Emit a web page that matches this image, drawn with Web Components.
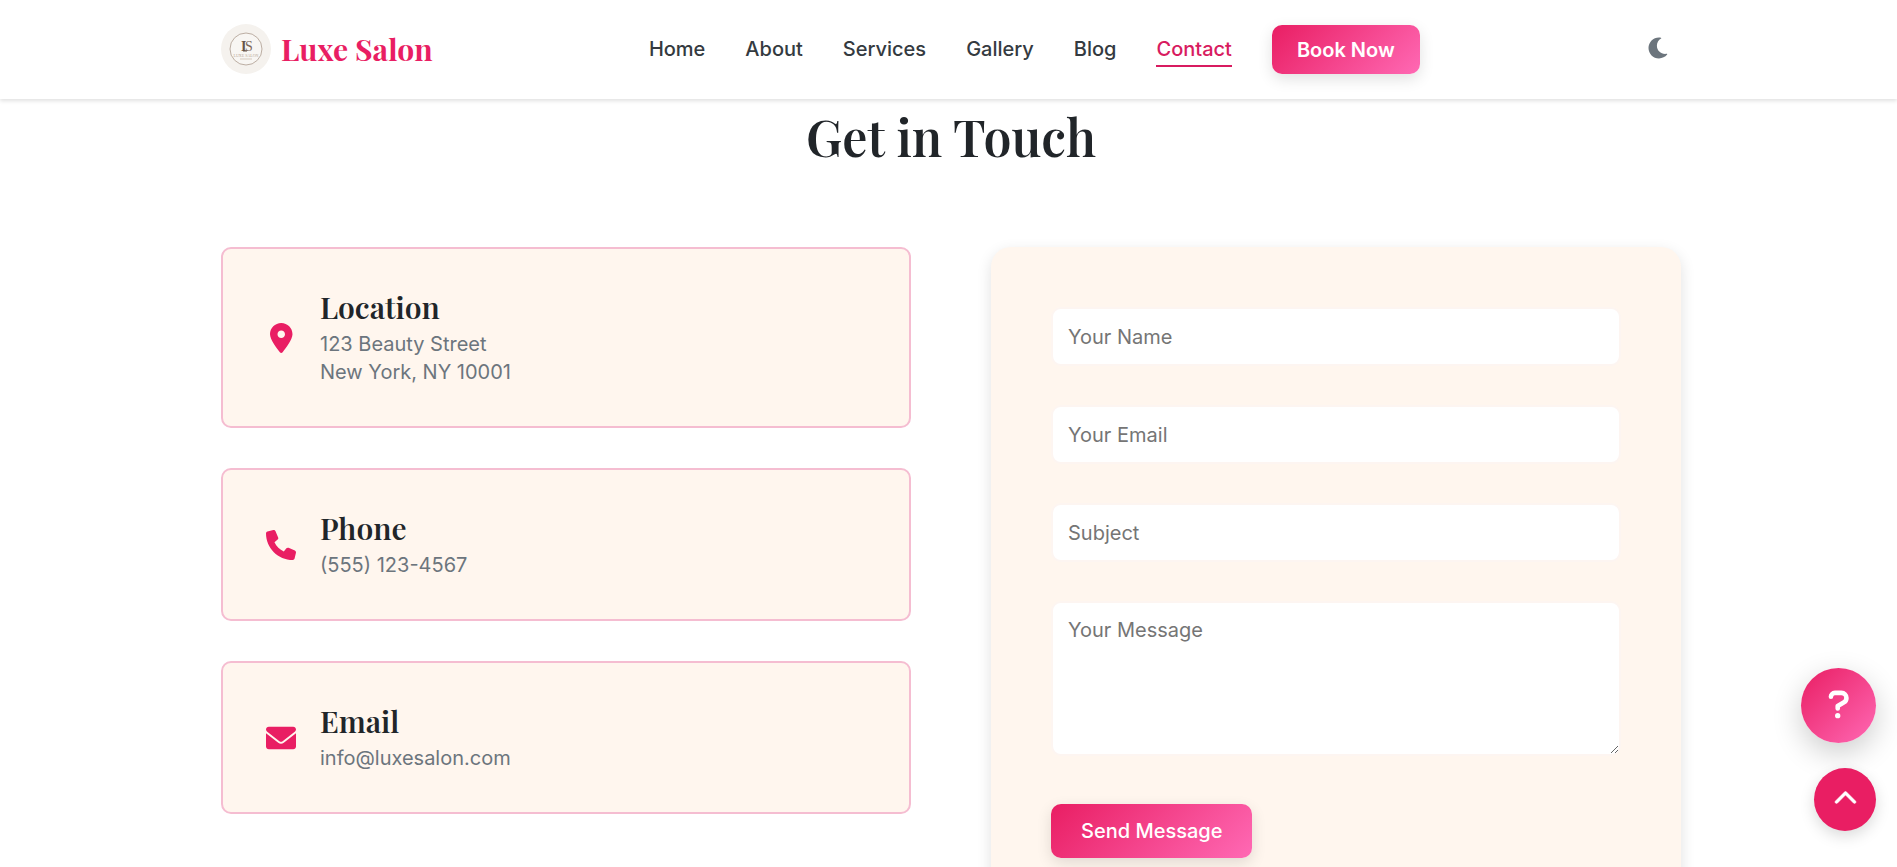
<!DOCTYPE html>
<html lang="en">
<head>
    <meta charset="utf-8">
    <meta name="viewport" content="width=device-width, initial-scale=1">
    <title>Luxe Salon - Contact</title>
    <style>
        html {
            --primary: #e91e63;
            --primary-dark: #d81b60;
            --gradient: linear-gradient(135deg, #e91e63, #ff69b4);
            --cream: #fff6ee;
            --border: #f5bdd1;
            --dark: #212529;
            --muted: #6c757d;
            --heading-font: "Playfair Display", "Liberation Serif", serif;
            scrollbar-width: none;
        }

        body {
            margin: 0;
            background: #fff;
            color: var(--dark);
            font: 400 20px/28px Inter, "Liberation Sans", sans-serif;
        }
    </style>
</head>
<body>

<salon-header>
    <salon-nav-link href="#home">Home</salon-nav-link>
    <salon-nav-link href="#about">About</salon-nav-link>
    <salon-nav-link href="#services">Services</salon-nav-link>
    <salon-nav-link href="#gallery">Gallery</salon-nav-link>
    <salon-nav-link href="#blog">Blog</salon-nav-link>
    <salon-nav-link href="#contact" active>Contact</salon-nav-link>
</salon-header>

<salon-contact>
    <span slot="title">Get in Touch</span>
    <salon-info-card slot="info" icon="location">
        <span slot="title">Location</span>
        123 Beauty Street<br>New York, NY 10001
    </salon-info-card>
    <salon-info-card slot="info" icon="phone">
        <span slot="title">Phone</span>
        (555) 123-4567
    </salon-info-card>
    <salon-info-card slot="info" icon="envelope">
        <span slot="title">Email</span>
        info@luxesalon.com
    </salon-info-card>
    <salon-contact-form slot="form"></salon-contact-form>
</salon-contact>

<salon-floating-actions></salon-floating-actions>

<script>
(() => {

    const ICONS = {
        location: ["0 0 384 512", `<path d="M168.3 499.2C116.1 435 0 279.4 0 192C0 85.96 85.96 0 192 0C298 0 384 85.96 384 192C384 279.4 267 435 215.7 499.2C203.4 514.5 180.6 514.5 168.3 499.2zM192 256C227.3 256 256 227.3 256 192C256 156.7 227.3 128 192 128C156.7 128 128 156.7 128 192C128 227.3 156.7 256 192 256z"/>`],
        phone: ["0 0 512 512", `<path d="M511.2 387l-23.25 100.8c-3.266 14.25-15.79 24.22-30.46 24.22C205.2 512 0 306.8 0 54.5c0-14.66 9.969-27.2 24.22-30.45l100.8-23.25C139.7-2.602 154.7 5.018 160.8 18.92l46.52 108.5c5.438 12.78 1.77 27.67-8.98 36.45L144.5 207.1c33.98 69.22 90.26 125.5 159.5 159.5l44.08-53.8c8.688-10.78 23.69-14.51 36.47-8.975l108.5 46.51C506.1 357.2 514.6 372.4 511.2 387z"/>`],
        envelope: ["0 0 512 512", `<path d="M256 352c-16.53 0-33.06-5.422-47.16-16.41L0 173.2V400C0 426.5 21.49 448 48 448h416c26.51 0 48-21.49 48-48V173.2l-208.8 162.5C289.1 346.6 272.5 352 256 352zM16.29 145.3l212.2 165.1c16.19 12.6 38.87 12.6 55.06 0l212.2-165.1C505.1 137.3 512 125 512 112C512 85.49 490.5 64 464 64h-416C21.49 64 0 85.49 0 112C0 125 6.01 137.3 16.29 145.3z"/>`],
        moon: ["0 0 512 512", `<path d="M32 256c0-123.8 100.3-224 223.8-224c11.36 0 29.7 1.668 40.9 3.746c9.616 1.777 11.75 14.63 3.279 19.44C245 86.5 211.2 144.6 211.2 207.8c0 109.7 99.71 193 208.3 172.3c9.561-1.805 16.28 9.324 10.11 16.95C387.9 448.6 324.8 480 255.8 480C132.1 480 32 379.6 32 256z"/>`],
        question: ["0 0 320 512", `<path fill="none" stroke="currentColor" stroke-width="76" stroke-linecap="round" stroke-linejoin="round" d="M32 128c0-35.3 28.7-64 64-64h108.3c46.2 0 83.7 37.5 83.7 83.8c0 32-17.8 60.6-46.5 75.3L144 280v40"/><circle cx="144" cy="440" r="44"/>`],
        chevron: ["0 0 448 512", `<path stroke="currentColor" stroke-width="10" d="M416 352c-8.188 0-16.38-3.125-22.62-9.375L224 173.3l-169.4 169.4c-12.5 12.5-32.75 12.5-45.25 0s-12.5-32.75 0-45.25l192-192c12.5-12.5 32.75-12.5 45.25 0l192 192c12.5 12.5 12.5 32.75 0 45.25C432.4 348.9 424.2 352 416 352z"/>`]
    }

    function define(name, template, setup){
        let el = document.createElement("template")
        el.innerHTML = template
        customElements.define(name, class extends HTMLElement {
            constructor(){
                super()
                this.root = this.attachShadow({mode: 'open'})
                this.root.appendChild(el.content.cloneNode(true))
            }

            connectedCallback(){
                if(setup) setup(this, this.root)
            }
        })
    }

    define("salon-icon", `
        <style>
            :host { display: flex; justify-content: center; }
            svg { display: block; height: var(--icon-size, 30px); fill: currentColor; overflow: visible; }
        </style>
        <svg aria-hidden="true"></svg>
    `, (host, root) => {
        let icon = ICONS[host.getAttribute("name")]
        if(!icon) return
        let svg = root.querySelector("svg")
        svg.setAttribute("viewBox", icon[0])
        svg.innerHTML = icon[1]
    })

    define("salon-button", `
        <style>
            :host { display: block; }
            button {
                display: block;
                border: 0;
                border-radius: 10px;
                padding: var(--button-padding, 13px 30px);
                background: var(--gradient);
                color: #fff;
                font: inherit;
                font-weight: var(--button-weight, 500);
                box-shadow: 0 5px 15px rgba(0, 0, 0, 0.12);
                cursor: pointer;
            }
        </style>
        <button type="button"><slot></slot></button>
    `)

    define("salon-logo", `
        <style>
            :host { display: block; }
            a { display: flex; align-items: center; gap: 10px; color: var(--primary); text-decoration: none; }
            svg { display: block; width: 50px; height: 50px; }
            span { font: 700 30px/40px var(--heading-font); }
        </style>
        <a href="#home">
            <svg viewBox="0 0 50 50" aria-hidden="true">
                <circle cx="25" cy="25" r="25" fill="#f5f2ee"/>
                <circle cx="25" cy="25" r="16" fill="#f8f6f3" stroke="#bcaea3"/>
                <g font-family="Liberation Serif, serif">
                    <text x="20" y="27" font-size="14" font-weight="700" fill="#66544a">I</text>
                    <text x="24" y="27" font-size="14" fill="#7d685b">S</text>
                    <text x="25" y="33" font-size="4" text-anchor="middle" fill="#b9a898">LUXE SALON</text>
                </g>
                <path d="M22 27h4" stroke="#66544a"/>
                <path d="M19 35h12" stroke="#d5c9be"/>
            </svg>
            <span>Luxe Salon</span>
        </a>
    `)

    define("salon-nav-link", `
        <style>
            :host { display: block; }
            a {
                display: block;
                padding: 4px 0 2px;
                border-bottom: 2px solid transparent;
                color: #343a40;
                font-weight: 500;
                text-decoration: none;
            }
            :host([active]) a { color: var(--primary-dark); border-color: var(--primary-dark); }
        </style>
        <a><slot></slot></a>
    `, (host, root) => {
        root.querySelector("a").href = host.getAttribute("href")
    })

    define("salon-header", `
        <style>
            :host {
                display: block;
                position: sticky;
                top: 0;
                z-index: 10;
                background: #fff;
                box-shadow: 0 2px 4px rgba(0, 0, 0, 0.12);
            }
            header {
                box-sizing: border-box;
                max-width: 1545px;
                margin: 0 auto;
                padding: 24px 40px 25px 45px;
                display: flex;
                align-items: center;
                justify-content: space-between;
            }
            nav { display: flex; align-items: center; gap: 40px; }
            salon-button { --button-padding: 11px 25px 10px; --button-weight: 600; }
            .theme {
                width: 45px;
                height: 50px;
                padding: 0 0 2px;
                border: 0;
                background: none;
                color: var(--muted);
                --icon-size: 24px;
                cursor: pointer;
            }
        </style>
        <header>
            <salon-logo></salon-logo>
            <nav>
                <slot></slot>
                <salon-button>Book Now</salon-button>
            </nav>
            <button class="theme" type="button" aria-label="Toggle dark mode"><salon-icon name="moon"></salon-icon></button>
        </header>
    `)

    define("salon-info-card", `
        <style>
            :host {
                display: flex;
                align-items: center;
                gap: 21px;
                padding: 40px;
                border: 2px solid var(--border);
                border-radius: 10px;
                background: var(--cream);
            }
            .icon { width: 36px; color: var(--primary); }
            h3 { margin: 0 0 5px; font: 600 30px/36px var(--heading-font); }
            p { margin: 0; color: var(--muted); }
        </style>
        <div class="icon"></div>
        <div>
            <h3><slot name="title"></slot></h3>
            <p><slot></slot></p>
        </div>
    `, (host, root) => {
        root.querySelector(".icon").innerHTML = `<salon-icon name="${host.getAttribute("icon")}"></salon-icon>`
    })

    define("salon-contact-form", `
        <style>
            :host {
                display: block;
                padding: 60px;
                border-radius: 20px;
                background: var(--cream);
                box-shadow: 0 5px 15px rgba(0, 0, 0, 0.12);
            }
            form { display: flex; flex-direction: column; align-items: flex-start; gap: 39px; }
            input, textarea {
                display: block;
                box-sizing: border-box;
                width: 100%;
                padding: 13px 15px;
                border: 2px solid #fdf5f1;
                border-radius: 10px;
                background: #fff;
                color: var(--dark);
                font: inherit;
            }
            input { height: 59px; }
            textarea { height: 155px; resize: vertical; }
            ::placeholder { color: #757575; }
            salon-button { margin-top: 9px; }
        </style>
        <form>
            <input type="text" name="name" placeholder="Your Name" aria-label="Your Name">
            <input type="email" name="email" placeholder="Your Email" aria-label="Your Email">
            <input type="text" name="subject" placeholder="Subject" aria-label="Subject">
            <textarea name="message" placeholder="Your Message" aria-label="Your Message"></textarea>
            <salon-button>Send Message</salon-button>
        </form>
    `)

    define("salon-contact", `
        <style>
            :host {
                display: block;
                box-sizing: border-box;
                max-width: 1545px;
                margin: 0 auto;
                padding: 8px 40px 80px 45px;
            }
            h2 { margin: 0 0 80px; text-align: center; font: 600 50px/60px var(--heading-font); }
            .columns { display: grid; grid-template-columns: 1fr 1fr; gap: 80px; align-items: start; }
            .info { display: flex; flex-direction: column; gap: 40px; }
        </style>
        <h2><slot name="title"></slot></h2>
        <div class="columns">
            <div class="info"><slot name="info"></slot></div>
            <slot name="form"></slot>
        </div>
    `)

    define("salon-floating-actions", `
        <style>
            :host {
                position: fixed;
                right: 21px;
                bottom: 36px;
                z-index: 5;
                display: flex;
                flex-direction: column;
                align-items: flex-end;
                gap: 25px;
            }
            button {
                display: flex;
                align-items: center;
                justify-content: center;
                padding: 0 0 2px;
                box-sizing: border-box;
                border: 0;
                border-radius: 50%;
                color: #fff;
                cursor: pointer;
            }
            .help {
                width: 75px;
                height: 75px;
                background: var(--gradient);
                box-shadow: 0 10px 30px rgba(0, 0, 0, 0.2);
                --icon-size: 31px;
            }
            .top {
                width: 62px;
                height: 63px;
                background: var(--primary);
                box-shadow: 0 5px 15px rgba(0, 0, 0, 0.15);
                --icon-size: 24px;
            }
        </style>
        <button class="help" type="button" aria-label="Help"><salon-icon name="question"></salon-icon></button>
        <button class="top" type="button" aria-label="Back to top"><salon-icon name="chevron"></salon-icon></button>
    `, (host, root) => {
        root.querySelector(".top").addEventListener("click", () => window.scrollTo({top: 0, behavior: "smooth"}))
    })

})()
</script>
</body>
</html>
